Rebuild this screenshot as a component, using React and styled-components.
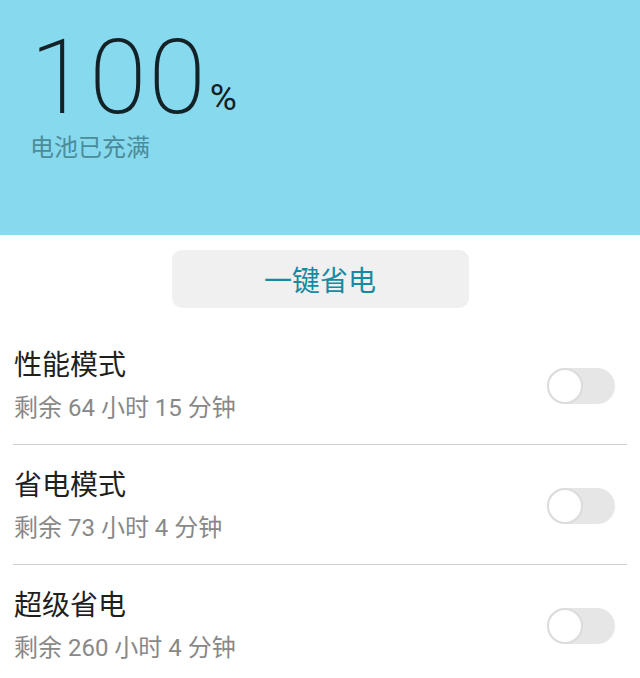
import React, { useState } from 'react';
import styled, { createGlobalStyle } from 'styled-components';

const GlobalStyle = createGlobalStyle`
    html, body {
        margin: 0;
        padding: 0;
        background: #fff;
    }
    body {
        font-family: Roboto, "Noto Sans CJK SC", sans-serif;
    }
`;

const Page = styled.div`
    width: 640px;
    min-height: 678px;
    background: #fff;
`;

const Header = styled.div`
    height: 235px;
    box-sizing: border-box;
    padding: 26px 0 0 30px;
    background: #87d9ee;
`;

const Level = styled.div`
    display: flex;
    align-items: baseline;
    height: 104px;
    margin-left: 0;
`;

const Number = styled.span`
    font-family: Roboto, sans-serif;
    font-weight: 200;
    font-size: 104px;
    line-height: 104px;
    letter-spacing: 2px;
    color: #122226;
`;

const Percent = styled.span`
    font-family: Roboto, sans-serif;
    font-weight: 400;
    font-size: 37px;
    line-height: 37px;
    margin-left: 2px;
    color: #122226;
    position: relative;
    top: -3px;
`;

const Status = styled.div`
    margin-top: 3px;
    font-size: 24px;
    line-height: 30px;
    color: #4b8c9b;
`;

const ButtonWrap = styled.div`
    display: flex;
    justify-content: center;
    padding-top: 15px;
`;

const SaveButton = styled.button`
    width: 297px;
    height: 58px;
    border: none;
    border-radius: 10px;
    background: #f0f0f0;
    color: #178aa0;
    font-family: Roboto, "Noto Sans CJK SC", sans-serif;
    font-size: 28px;
    cursor: pointer;
`;

const List = styled.div`
    margin-top: 17px;
    padding: 0 13px;
`;

const Row = styled.div`
    display: flex;
    align-items: center;
    justify-content: space-between;
    padding: 23px 12px 21px 1px;
    border-bottom: ${props => (props.last ? 'none' : '1px solid #cfcfcf')};
`;

const Texts = styled.div`
    display: flex;
    flex-direction: column;
    gap: 10px;
`;

const Title = styled.div`
    font-size: 28px;
    line-height: 35px;
    color: #1f1f1f;
`;

const Sub = styled.div`
    font-size: 24px;
    line-height: 30px;
    color: #888;
`;

const Track = styled.div`
    position: relative;
    width: 68px;
    height: 36px;
    border-radius: 18px;
    background: ${props => (props.on ? '#7fd3e8' : '#e6e6e6')};
    cursor: pointer;
`;

const Knob = styled.div`
    position: absolute;
    top: 0;
    left: ${props => (props.on ? '32px' : '0')};
    width: 36px;
    height: 36px;
    box-sizing: border-box;
    border-radius: 50%;
    background: #fff;
    border: 2px solid #dcdcdc;
`;

function Toggle() {
    const [on, setOn] = useState(false);
    return (
        <Track on={on ? 1 : 0} onClick={() => setOn(!on)}>
            <Knob on={on ? 1 : 0} />
        </Track>
    );
}

const modes = [
    { title: '性能模式', left: '剩余 64 小时 15 分钟' },
    { title: '省电模式', left: '剩余 73 小时 4 分钟' },
    { title: '超级省电', left: '剩余 260 小时 4 分钟' },
];

export default function App() {
    return (
        <Page>
            <GlobalStyle />
            <Header>
                <Level>
                    <Number>100</Number>
                    <Percent>%</Percent>
                </Level>
                <Status>电池已充满</Status>
            </Header>
            <ButtonWrap>
                <SaveButton>一键省电</SaveButton>
            </ButtonWrap>
            <List>
                {modes.map((m, i) => (
                    <Row key={m.title} last={i === modes.length - 1}>
                        <Texts>
                            <Title>{m.title}</Title>
                            <Sub>{m.left}</Sub>
                        </Texts>
                        <Toggle />
                    </Row>
                ))}
            </List>
        </Page>
    );
}
